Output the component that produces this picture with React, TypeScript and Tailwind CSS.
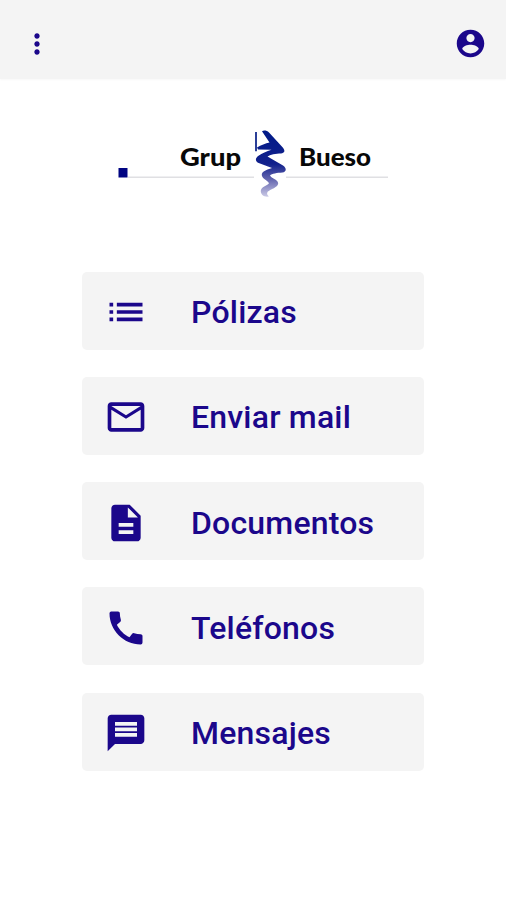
const NAVY = "#1b078b";

const MENU: { label: string; icon: string }[] = [
  {
    label: "Pólizas",
    icon: "M3 13h2v-2H3v2zm0 4h2v-2H3v2zm0-8h2V7H3v2zm4 4h14v-2H7v2zm0 4h14v-2H7v2zM7 7v2h14V7H7z",
  },
  {
    label: "Enviar mail",
    icon: "M22 6c0-1.1-.9-2-2-2H4c-1.1 0-2 .9-2 2v12c0 1.1.9 2 2 2h16c1.1 0 2-.9 2-2V6zm-2 0l-8 5-8-5h16zm0 12H4V8l8 5 8-5v10z",
  },
  {
    label: "Documentos",
    icon: "M14 2H6c-1.1 0-1.99.9-1.99 2L4 20c0 1.1.89 2 1.99 2H18c1.1 0 2-.9 2-2V8l-6-6zm2 16H8v-2h8v2zm0-4H8v-2h8v2zm-3-5V3.5L18.5 9H13z",
  },
  {
    label: "Teléfonos",
    icon: "M20.01 15.38c-1.23 0-2.42-.2-3.53-.56a.977.977 0 0 0-1.01.24l-1.57 1.97c-2.83-1.35-5.48-3.9-6.89-6.83l1.95-1.66c.27-.28.35-.67.24-1.02-.37-1.11-.56-2.3-.56-3.53 0-.54-.45-.99-.99-.99H4.19C3.65 3 3 3.24 3 3.99 3 13.28 10.73 21 20.01 21c.71 0 .99-.63.99-1.18v-3.45c0-.54-.45-.99-.99-.99z",
  },
  {
    label: "Mensajes",
    icon: "M20 2H4c-1.1 0-1.99.9-1.99 2L2 22l4-4h14c1.1 0 2-.9 2-2V4c0-1.1-.9-2-2-2zm-2 12H6v-2h12v2zm0-3H6V9h12v2zm0-3H6V6h12v2z",
  },
];

function Icon({ path, size }: { path: string; size: number }) {
  return (
    <svg width={size} height={size} viewBox="0 0 24 24" fill={NAVY} className="shrink-0">
      <path d={path} />
    </svg>
  );
}

function Logo() {
  return (
    <svg width="282" height="76" viewBox="112 126 282 76" className="shrink-0">
      <defs>
        <linearGradient id="ribbon" gradientUnits="userSpaceOnUse" x1="0" y1="130" x2="0" y2="198">
          <stop offset="0" stopColor="#001a88" />
          <stop offset="0.5" stopColor="#11208c" />
          <stop offset="0.72" stopColor="#6264ae" />
          <stop offset="1" stopColor="#d2d1ea" />
        </linearGradient>
      </defs>
      <path d="M128 177.3H254M286 177.3H388" stroke="#e0e0e3" strokeWidth="1.4" />
      <rect x="118.5" y="168" width="9" height="9.5" fill="#000482" />
      <path d="M255 132H257V151.3H255Z" fill="#2b3f98" />
      {/* ribbon: heavy down strokes, lighter returns */}
      <path
        d="M262 131.2C264 130 267 130.6 269 132.4L283 147.8C285.5 151 284.5 153.2 281 153.4C276 153.4 270 154.6 267.5 156.6L283 165.6C287 168.5 286.5 172 282.5 172.6C277 173 272 173.6 270 175.6C271.5 178.8 277.5 179.5 278.2 183C278.5 187.5 270 189.3 267.6 191.8C266.4 193.8 267.5 195.3 269 196.6C264 197.5 260.5 194.5 260.8 190.8C261.2 186.5 267 186 269 183.2C268 180.5 261 178.5 261.8 174C263 170.5 268.5 169.3 272 168L258 162.8C254.8 160.8 255.5 157.8 258.5 155.8C262 153.4 266.5 151.5 271.5 149.8L258 149.6L257 147.4C261 145.2 265.5 143.6 269.5 142.6Z"
        fill="url(#ribbon)"
      />
      <g fill="#080808" fontFamily="Lato, sans-serif" fontWeight="900" fontSize="25">
        <text x="180" y="166" textLength="61" lengthAdjust="spacingAndGlyphs">Grup</text>
        <text x="299" y="166" textLength="72" lengthAdjust="spacingAndGlyphs">Bueso</text>
      </g>
    </svg>
  );
}

export default function App() {
  return (
    <div className="flex h-[900px] w-full flex-col bg-white font-['Roboto',sans-serif]">
      <header className="flex h-[79px] shrink-0 items-center justify-between bg-[#f4f4f4] pt-[8px] pr-[19px] pl-[21px] shadow-[0_1px_2px_#f8f8f8]">
        <button aria-label="Menú">
          <Icon
            size={32}
            path="M12 8c1.1 0 2-.9 2-2s-.9-2-2-2-2 .9-2 2 .9 2 2 2zm0 2c-1.1 0-2 .9-2 2s.9 2 2 2 2-.9 2-2-.9-2-2-2zm0 6c-1.1 0-2 .9-2 2s.9 2 2 2 2-.9 2-2-.9-2-2-2z"
          />
        </button>
        <button aria-label="Perfil">
          <Icon
            size={33}
            path="M12 2C6.48 2 2 6.48 2 12s4.48 10 10 10 10-4.48 10-10S17.52 2 12 2zm0 3c1.66 0 3 1.34 3 3s-1.34 3-3 3-3-1.34-3-3 1.34-3 3-3zm0 14.2c-2.5 0-4.71-1.28-6-3.22.03-1.99 4-3.08 6-3.08 1.99 0 5.97 1.09 6 3.08-1.29 1.94-3.5 3.22-6 3.22z"
          />
        </button>
      </header>

      <div className="flex justify-center pt-[47px]">
        <Logo />
      </div>

      <nav className="mx-auto mt-[69.5px] flex w-[342px] flex-col gap-[27.3px]">
        {MENU.map(({ label, icon }) => (
          <button key={label} className="flex h-[78px] items-center rounded-[5px] bg-[#f4f4f4] pt-[3px] pl-[22px] text-left">
            <Icon path={icon} size={44} />
            <span className="ml-[43px] text-[32px] leading-none font-medium tracking-[0.2px] text-[#1b078b]">{label}</span>
          </button>
        ))}
      </nav>
    </div>
  );
}
